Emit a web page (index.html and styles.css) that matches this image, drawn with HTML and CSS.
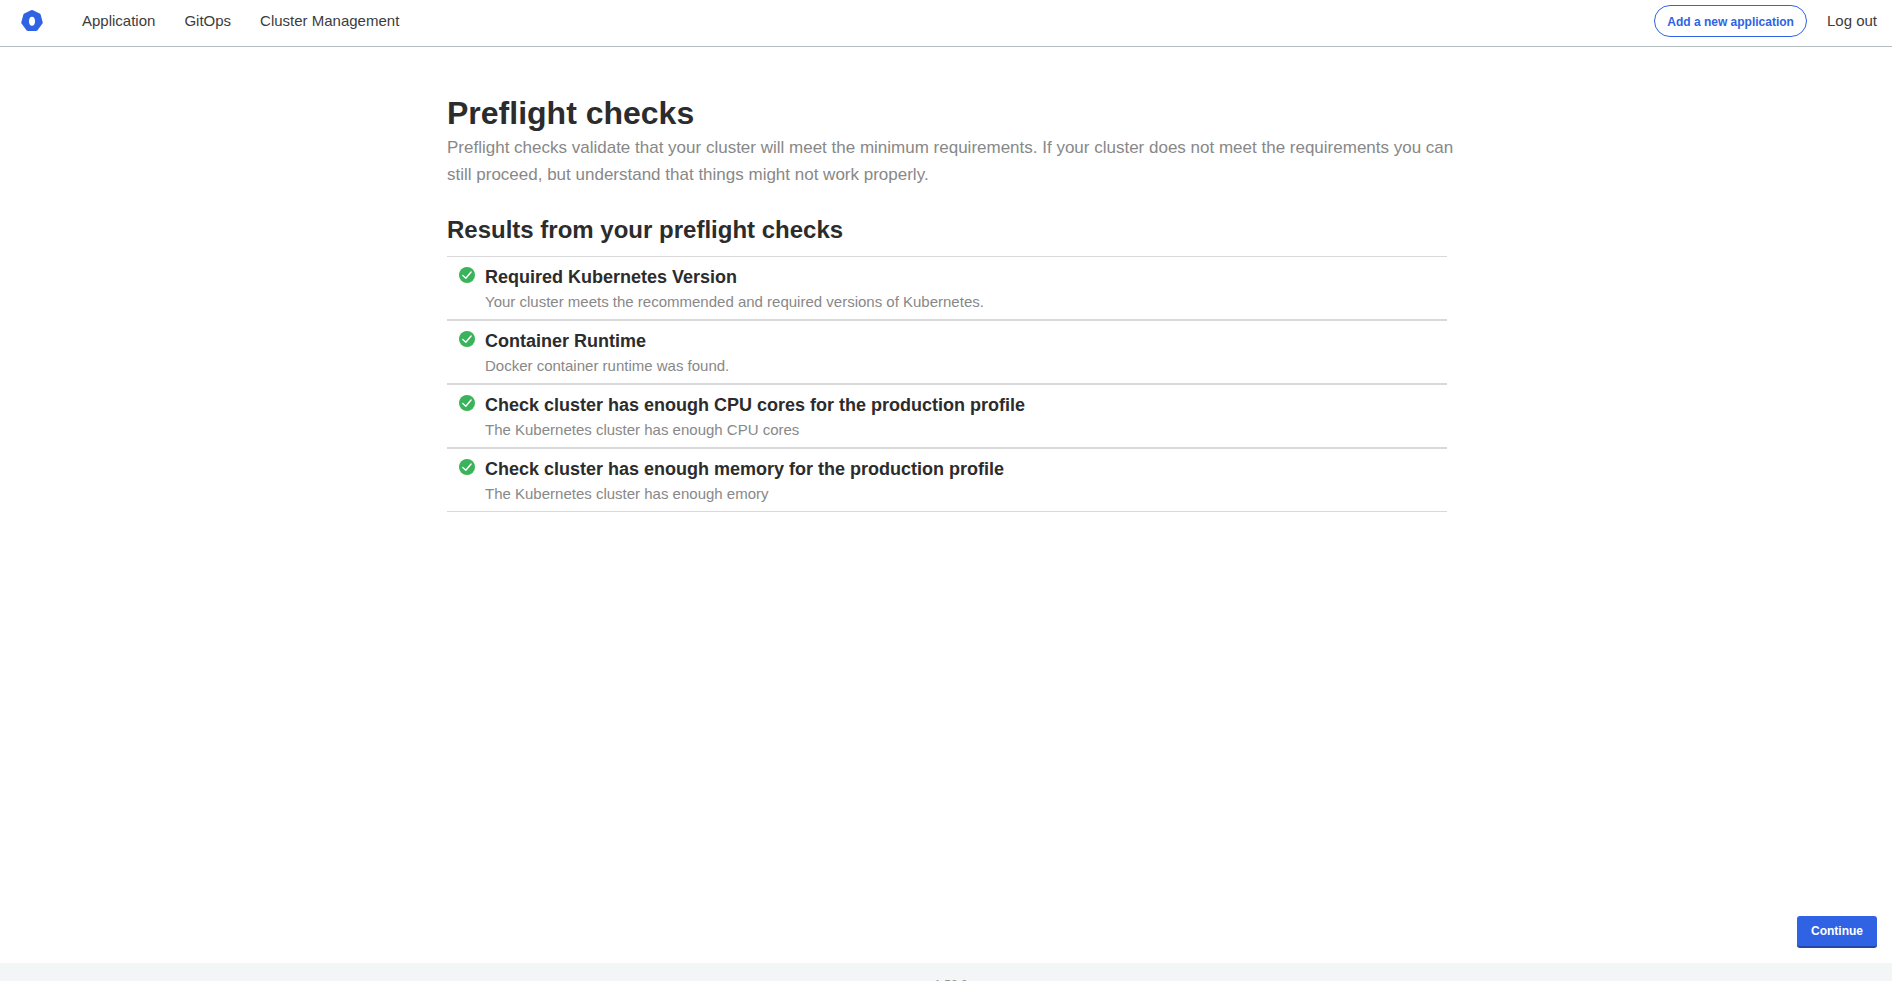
FILE: index.html
```html
<!DOCTYPE html>
<html lang="en">
<head>
<meta charset="utf-8">
<title>Preflight checks</title>
<link rel="stylesheet" href="styles.css">
</head>
<body>
<svg class="sprite" aria-hidden="true">
  <symbol id="check" viewBox="0 0 16 16">
    <circle cx="8" cy="8" r="8" fill="#3bb35a"/>
    <path d="M3.8 8.4 6.8 11.2 12.1 5" fill="none" stroke="#fff" stroke-width="1.4" stroke-linecap="round" stroke-linejoin="round"/>
  </symbol>
</svg>
<div class="page">
  <header class="navbar">
    <a class="logo" href="#" aria-label="Home">
      <svg width="22" height="22" viewBox="0 0 22 22"><path fill="#2f63e4" fill-rule="evenodd" d="M10 .3Q11 -.1 12 .3L18.7 3.4Q19.4 3.8 19.6 4.6L21.7 12.2Q21.8 13 21.3 13.8L16.5 20.2Q16 21 15 21H7Q6 21 5.5 20.2L.7 13.8Q.2 13 .3 12.2L2.4 4.6Q2.6 3.8 3.3 3.4ZM11 6.8C9 6.8 8 8.8 8 11.3S9 15.8 11 15.8 14 13.8 14 11.3 13 6.8 11 6.8Z"/></svg>
    </a>
    <nav class="links">
      <a href="#">Application</a>
      <a href="#">GitOps</a>
      <a href="#">Cluster Management</a>
    </nav>
    <div class="actions">
      <button class="add" type="button">Add a new application</button>
      <a href="#">Log out</a>
    </div>
  </header>
  <main class="content">
    <h1>Preflight checks</h1>
    <p class="intro">Preflight checks validate that your cluster will meet the minimum requirements. If your cluster does not meet the requirements you can still proceed, but understand that things might not work properly.</p>
    <h2>Results from your preflight checks</h2>
    <ul class="results">
      <li class="result"><svg class="check"><use href="#check"/></svg><div><h3>Required Kubernetes Version</h3><p>Your cluster meets the recommended and required versions of Kubernetes.</p></div></li>
      <li class="result"><svg class="check"><use href="#check"/></svg><div><h3>Container Runtime</h3><p>Docker container runtime was found.</p></div></li>
      <li class="result"><svg class="check"><use href="#check"/></svg><div><h3>Check cluster has enough CPU cores for the production profile</h3><p>The Kubernetes cluster has enough CPU cores</p></div></li>
      <li class="result"><svg class="check"><use href="#check"/></svg><div><h3>Check cluster has enough memory for the production profile</h3><p>The Kubernetes cluster has enough emory</p></div></li>
    </ul>
  </main>
  <div class="bottom"><button class="continue" type="button">Continue</button></div>
</div>
<footer class="footer">v1.50.0</footer>
</body>
</html>
```
FILE: styles.css
```css
* { box-sizing: border-box; }
body {
  margin: 0;
  height: 100vh;
  overflow: hidden;
  display: flex;
  flex-direction: column;
  background: #fff;
  color: #2c2c2c;
  font-family: "Liberation Sans", Arial, sans-serif;
}
h1, h2, h3, p, ul { margin: 0; padding: 0; }
button { font-family: inherit; cursor: pointer; }
.sprite { display: none; }
.page { flex: 1; display: flex; flex-direction: column; }
.navbar {
  display: flex;
  align-items: center;
  padding: 0 15px 4px 21px;
  height: 47px;
  border-bottom: 1px solid #b3bdbf;
}
.navbar a { color: #3c3c3c; font-size: 15px; line-height: 20px; text-decoration: none; }
.logo { display: flex; margin-right: 39px; }
.links { display: flex; gap: 29px; }
.actions { display: flex; align-items: center; gap: 20px; margin-left: auto; }
.add {
  height: 32px;
  padding: 1px 12px 0;
  border: 1px solid #2f63e4;
  border-radius: 16px;
  background: #fff;
  color: #2f63e4;
  font-size: 12px;
  font-weight: 700;
}
.content {
  flex: 1;
  width: 100%;
  max-width: 1002px;
  margin: 0 auto;
  padding: 46px 0 0 2px;
}
h1 { font-size: 32px; line-height: 40px; }
.intro { margin: 1px -10px 0 0; color: #888; font-size: 17px; line-height: 27px; }
h2 { margin-top: 26px; font-size: 24px; line-height: 32px; }
.results { margin-top: 10px; list-style: none; }
.result {
  display: flex;
  gap: 10px;
  padding: 8px 12px 6px;
  border-top: 1px solid #d9d9d9;
  border-bottom: 1px solid #d9d9d9;
}
.check { width: 16px; height: 16px; margin-top: 2px; }
h3 { font-size: 18px; line-height: 24px; }
.result p { margin-top: 1px; color: #888; font-size: 15px; line-height: 23px; }
.bottom { display: flex; justify-content: flex-end; padding: 0 15px 15px; }
.continue {
  height: 32px;
  padding: 0 14px;
  border: 0;
  border-bottom: 2px solid #2247a8;
  border-radius: 3px;
  background: #2f63e4;
  color: #fff;
  font-size: 12px;
  font-weight: 700;
}
.footer {
  height: 18px;
  padding: 14px 0 0 4px;
  background: #f3f6f7;
  color: #959595;
  font-size: 12px;
  line-height: 16px;
  text-align: center;
}
```
